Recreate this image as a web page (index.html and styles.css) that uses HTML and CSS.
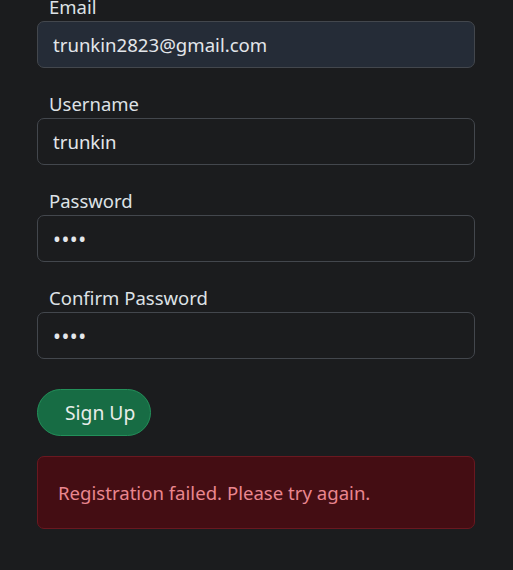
FILE: index.html
```html
<!DOCTYPE html>
<html lang="en">
<head>
<meta charset="utf-8">
<title>Sign Up</title>
<link rel="stylesheet" href="styles.css">
</head>
<body>
<main class="page">
  <form class="signup">
    <div class="field">
      <label class="field-label" for="email">Email</label>
      <input class="field-input field-input--filled" id="email" type="email" value="trunkin2823@gmail.com">
    </div>
    <div class="field">
      <label class="field-label" for="username">Username</label>
      <input class="field-input" id="username" type="text" value="trunkin">
    </div>
    <div class="field">
      <label class="field-label" for="password">Password</label>
      <input class="field-input" id="password" type="password" value="1234">
    </div>
    <div class="field">
      <label class="field-label" for="confirm">Confirm Password</label>
      <input class="field-input" id="confirm" type="password" value="1234">
    </div>
    <button class="btn-submit" type="button">Sign Up</button>
    <div class="alert-error">Registration failed. Please try again.</div>
  </form>
</main>
</body>
</html>
```
FILE: styles.css
```css
* { box-sizing: border-box; }
html, body {
  margin: 0;
  background: #1b1c1e;
  color: #dee2e6;
  font-family: "Noto Sans", "Open Sans", sans-serif;
}
.page {
  padding: 0 38px 0 37px;
  margin-top: -6px;
}
.signup {
  display: flex;
  flex-direction: column;
  width: 438px;
}
.field {
  display: flex;
  flex-direction: column;
  margin-bottom: 23px;
}
.field-label {
  font-size: 18.5px;
  line-height: 25px;
  margin-bottom: 2px;
  padding-left: 12px;
  color: #dee2e6;
}
.field-input {
  height: 47px;
  padding: 0 15px;
  font-family: inherit;
  font-size: 18.6px;
  color: #e3e6ea;
  background: #1b1c1e;
  border: 1px solid #43474d;
  border-radius: 7px;
  outline: none;
}
.field-input--filled {
  background: #252c37;
}
.field-input[type="password"] {
  font-size: 21px;
  letter-spacing: 0.5px;
}
.btn-submit {
  align-self: flex-start;
  margin-top: 7px;
  height: 47px;
  padding: 0 15px 0 27px;
  font-family: inherit;
  font-size: 19.3px;
  color: #e8ece9;
  background: #176c44;
  border: 1px solid #23905a;
  border-radius: 24px;
}
.alert-error {
  margin-top: 20px;
  padding: 22px 20px;
  min-height: 72px;
  font-size: 18.6px;
  line-height: 27px;
  color: #ea868f;
  background: #440d13;
  border: 1px solid #6a1820;
  border-radius: 7px;
}
```
